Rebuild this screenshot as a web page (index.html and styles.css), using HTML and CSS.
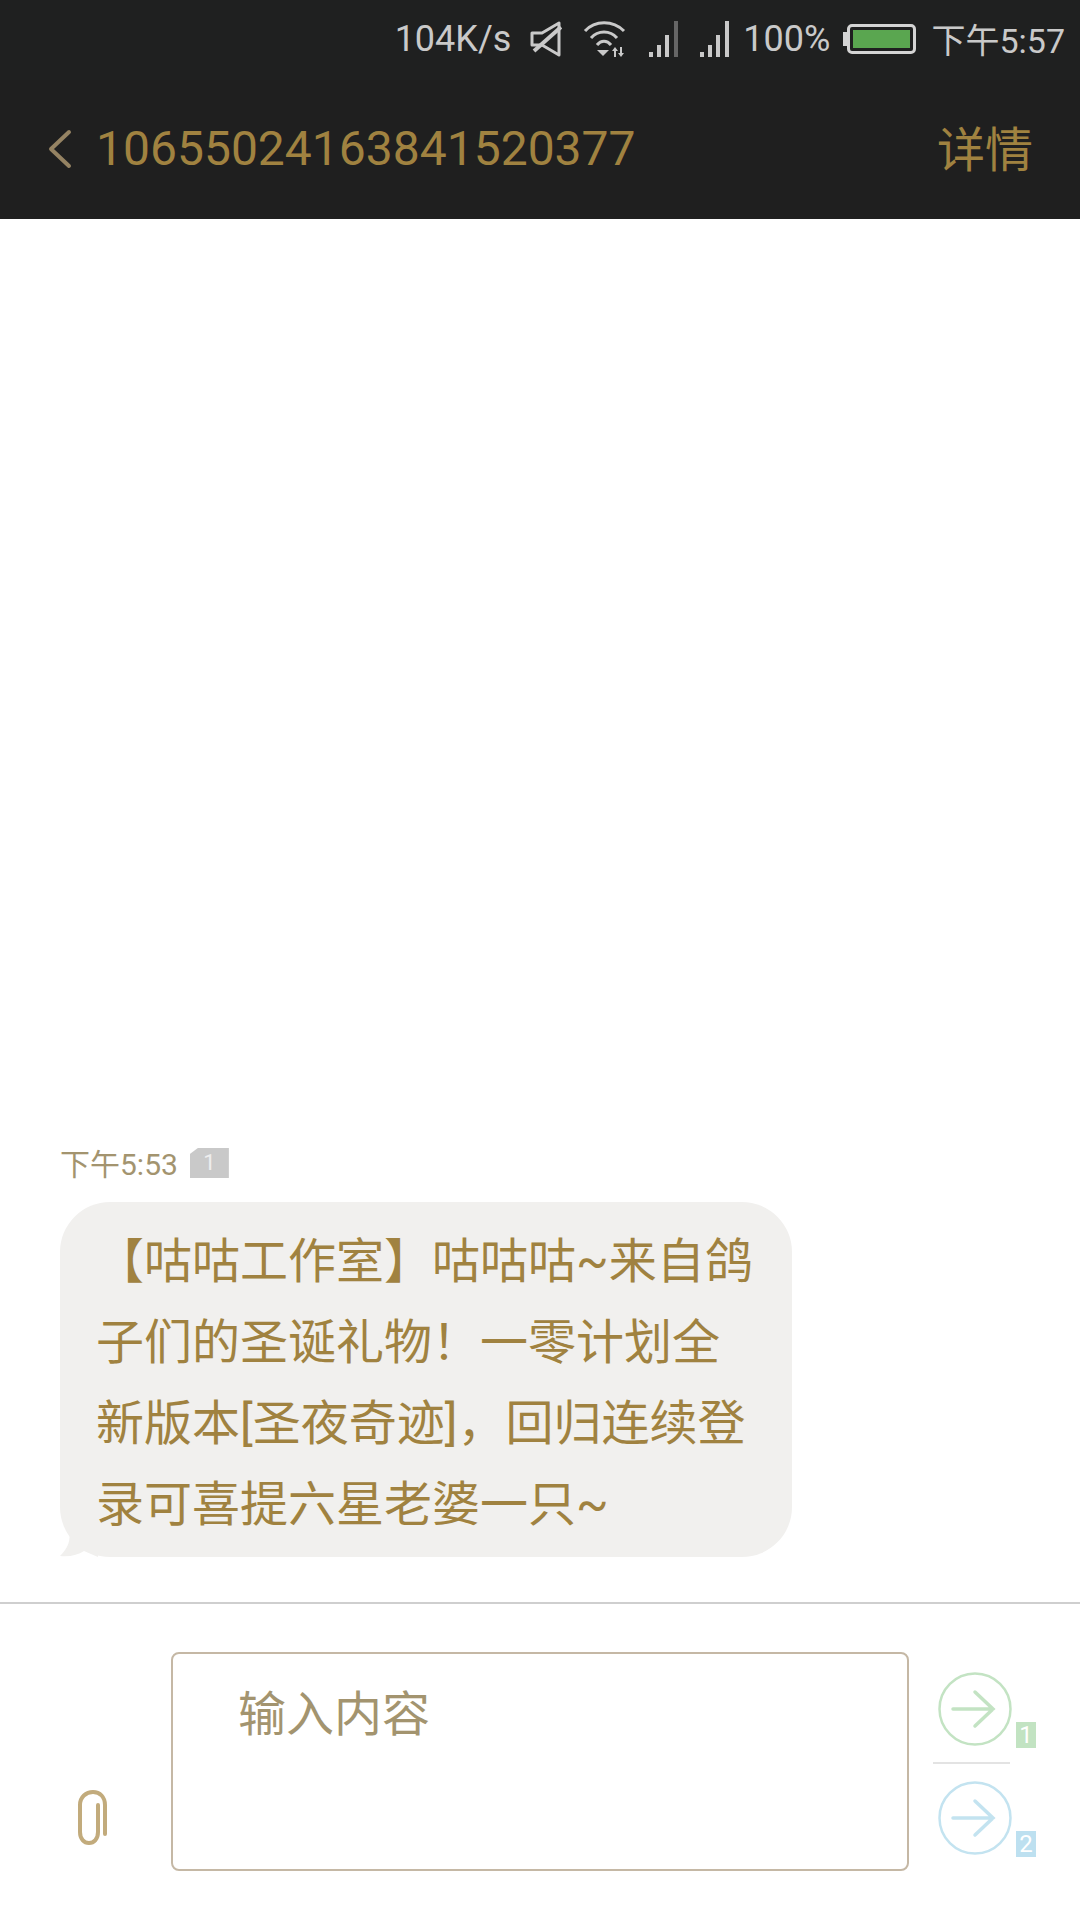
FILE: index.html
```html
<!DOCTYPE html>
<html lang="zh-CN">
<head>
  <meta charset="UTF-8">
  <meta name="viewport" content="width=device-width, initial-scale=1.0">
  <title>短信</title>
  <link rel="stylesheet" href="styles.css">
</head>
<body>
  <div class="phone">
    <div class="status-bar">
      <span class="status-text speed">104K/s</span>
      <svg class="icon-mute" width="32" height="36" viewBox="0 0 32 36" fill="none" stroke="#c9c9c9" stroke-width="3">
        <path d="M2 12h10L29 2v32L12 24H2z" stroke-linejoin="round"/>
        <path d="M4 30L31 6" stroke-width="4"/>
      </svg>
      <svg class="icon-wifi" width="44" height="38" viewBox="0 0 44 38" fill="none" stroke="#c9c9c9" stroke-width="3">
        <path d="M2 11C12 0 30 0 41 11"/>
        <path d="M8 18C15 10 27 10 34 18"/>
        <path d="M14 25C18 20 24 20 28 25"/>
        <path d="M14 30h12l-6 6z" fill="#c9c9c9" stroke="none"/>
        <path d="M32 29v8M38 27v8" stroke-width="2"/>
        <path d="M29 31l3-4 3 4zM35 33l3 4 3-4z" fill="#c9c9c9" stroke="none"/>
      </svg>
      <svg class="icon-signal" width="29" height="36" viewBox="0 0 29 36" fill="#c9c9c9">
        <rect x="0" y="31" width="4" height="5"/>
        <rect x="8" y="24" width="4" height="12"/>
        <rect x="16" y="14" width="4" height="22"/>
        <rect x="25" y="0" width="4" height="36" fill="#666"/>
      </svg>
      <svg class="icon-signal" width="29" height="36" viewBox="0 0 29 36" fill="#c9c9c9">
        <rect x="0" y="31" width="4" height="5"/>
        <rect x="8" y="24" width="4" height="12"/>
        <rect x="16" y="14" width="4" height="22"/>
        <rect x="25" y="0" width="4" height="36"/>
      </svg>
      <span class="status-text pct">100%</span>
      <div class="battery"><div class="battery-fill"></div></div>
      <span class="status-text clock">下午5:57</span>
    </div>

    <div class="title-bar">
      <svg class="back" width="24" height="40" viewBox="0 0 24 40" fill="none" stroke="#958363" stroke-width="4" stroke-linecap="round" stroke-linejoin="round">
        <path d="M21 3L3 20l18 17"/>
      </svg>
      <span class="title">10655024163841520377</span>
      <span class="details">详情</span>
    </div>

    <div class="messages">
      <div class="meta">
        <span class="time">下午5:53</span>
        <span class="sim-badge">1</span>
      </div>
      <div class="bubble">
        <p>【咕咕工作室】咕咕咕~来自鸽<br>子们的圣诞礼物！一零计划全<br>新版本[圣夜奇迹]，回归连续登<br>录可喜提六星老婆一只~</p>
        <svg class="tail" width="38" height="26" viewBox="0 0 38 26"><path d="M9 0C11 9 8 17 0 25C10 26 18 24 24 20L38 26V0z" fill="#f1f0ee"/></svg>
      </div>
    </div>

    <div class="composer">
      <svg class="clip" width="34" height="56" viewBox="0 0 34 56" fill="none" stroke="#c2ab7c" stroke-width="4" stroke-linecap="round">
        <path d="M28 44V15C28 7 23 2 16 2S3 7 3 15V42C3 49 7 53 12 53S21 49 21 42V15"/>
      </svg>
      <div class="input-box">输入内容</div>
      <div class="send-col">
        <div class="send-btn">
          <svg width="74" height="74" viewBox="0 0 74 74" fill="none" stroke="#c3e3c3" stroke-width="2.500">
            <circle cx="37" cy="37" r="35.500"/>
            <path d="M15 37h40M37 20l18 17-18 17" stroke-width="3.500" stroke-linecap="round"/>
          </svg>
          <span class="send-sim green">1</span>
        </div>
        <div class="send-sep"></div>
        <div class="send-btn">
          <svg width="74" height="74" viewBox="0 0 74 74" fill="none" stroke="#c3e3f0" stroke-width="2.500">
            <circle cx="37" cy="37" r="35.500"/>
            <path d="M15 37h40M37 20l18 17-18 17" stroke-width="3.500" stroke-linecap="round"/>
          </svg>
          <span class="send-sim blue">2</span>
        </div>
      </div>
    </div>
  </div>
</body>
</html>
```

FILE: styles.css
```css
body {
  margin: 0;
  background-color: #fff;
  font-family: Roboto, "Noto Sans CJK SC", sans-serif;
}

.phone {
  width: 1080px;
  height: 1920px;
  display: flex;
  flex-direction: column;
  overflow: hidden;
}

.status-bar {
  height: 80px;
  box-sizing: border-box;
  padding: 0 15px 3px 0;
  background-color: #1f2020;
  display: flex;
  justify-content: flex-end;
  align-items: center;
  color: #c9c9c9;
}

.status-text {
  font-size: 36px;
}

.icon-mute {
  margin-left: 19px;
}

.icon-wifi {
  margin-left: 21px;
}

.icon-signal {
  margin-left: 22px;
}

.pct {
  margin-left: 14px;
}

.battery {
  position: relative;
  width: 69px;
  height: 30px;
  box-sizing: border-box;
  margin-left: 17px;
  padding: 3px;
  border: 3px solid #d4d4d4;
  border-radius: 5px;
}

.battery::before {
  content: "";
  position: absolute;
  left: -7px;
  top: 5px;
  width: 4px;
  height: 14px;
  background-color: #d4d4d4;
}

.battery-fill {
  height: 100%;
  background-color: #5aa650;
}

.clock {
  margin-left: 15px;
  font-size: 34px;
}

.title-bar {
  height: 139px;
  box-sizing: border-box;
  padding: 0 48px 2px 48px;
  background-color: #1f1f1f;
  display: flex;
  align-items: center;
}

.title {
  margin-left: 24px;
  font-size: 48px;
  color: #a08240;
}

.details {
  margin: 0 -1px 6px auto;
  font-size: 48px;
  color: #a08240;
}

.messages {
  flex: 1;
  padding-left: 60px;
  display: flex;
  flex-direction: column;
  justify-content: flex-end;
  padding-bottom: 45px;
  border-bottom: 2px solid #cfcfcf;
}

.meta {
  display: flex;
  align-items: center;
  margin-bottom: 18px;
}

.time {
  font-size: 30px;
  color: #a3946f;
}

.sim-badge {
  width: 39px;
  height: 30px;
  margin: 2px 0 0 12px;
  background-color: #c9c9c9;
  clip-path: polygon(8px 0, 100% 0, 100% 100%, 0 100%, 0 6px);
  color: #eee;
  font-size: 22px;
  line-height: 30px;
  text-align: center;
}

.bubble {
  position: relative;
  width: 732px;
  height: 355px;
  box-sizing: border-box;
  padding: 19px 0 0 36px;
  background-color: #f1f0ee;
  border-radius: 50px;
}

.bubble p {
  margin: 0;
  font-size: 48px;
  line-height: 81px;
  color: #a08240;
  white-space: nowrap;
}

.tail {
  position: absolute;
  left: 0;
  bottom: 0;
}

.composer {
  height: 316px;
  box-sizing: border-box;
  padding: 48px 0 0 0;
  display: flex;
  align-items: flex-start;
}

.clip {
  margin: 138px -1px 0 77px;
}

.input-box {
  width: 738px;
  height: 219px;
  box-sizing: border-box;
  margin-left: 61px;
  padding: 29px 0 0 65px;
  border: 2px solid #c5b8a5;
  border-radius: 8px;
  font-size: 48px;
  line-height: 64px;
  color: #a3946f;
}

.send-col {
  margin-left: 24px;
  padding-top: 20px;
}

.send-btn {
  position: relative;
  width: 76px;
  height: 74px;
  padding-left: 5px;
}

.send-sim {
  position: absolute;
  left: 83px;
  bottom: -2px;
  width: 20px;
  height: 26px;
  color: #fff;
  font-size: 24px;
  line-height: 26px;
  text-align: center;
}

.green {
  background-color: #c2e3c2;
}

.blue {
  background-color: #bde0f0;
}

.send-sep {
  width: 77px;
  height: 2px;
  margin: 16px 0 17px 0;
  background-color: #e3e3e3;
}
```
